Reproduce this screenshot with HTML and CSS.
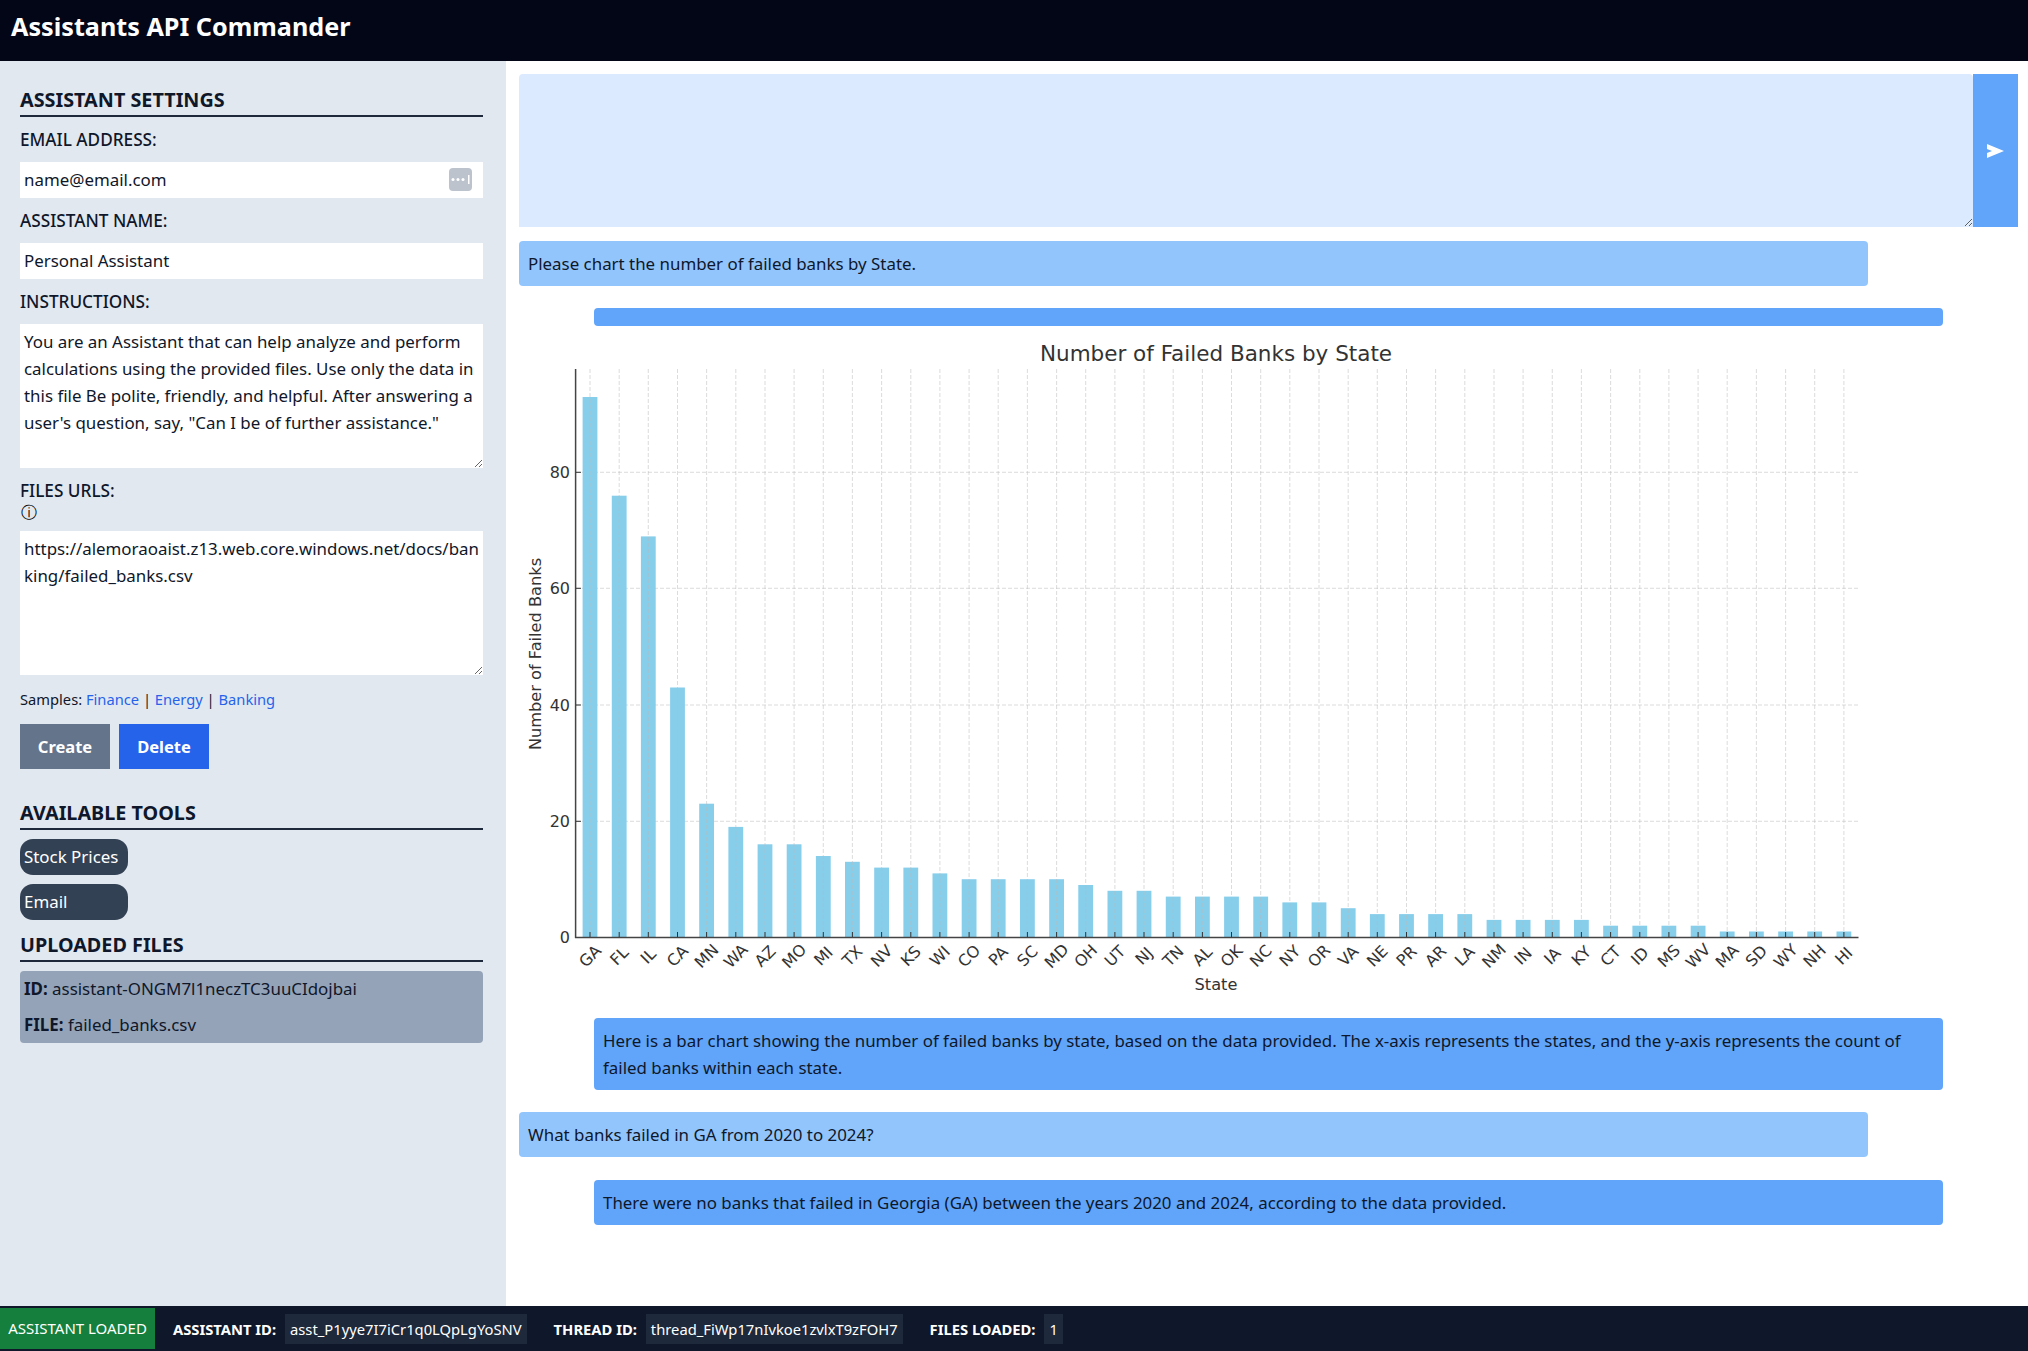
FILE: index.html
```html
<!DOCTYPE html>
<html lang="en">
<head>
    <meta charset="UTF-8">
    <title>Assistants API Commander</title>
    <link rel="stylesheet" href="styles.css">
</head>
<body>
<div class="app">
    <header class="topbar">Assistants API Commander</header>
    <div class="content">
        <aside class="sidebar">
            <h2 class="section-title first">ASSISTANT SETTINGS</h2>
            <label class="field-label">EMAIL ADDRESS:</label>
            <div class="input-wrap">
                <input class="field" type="text" value="name@email.com">
                <span class="pw-icon">
                    <svg width="23" height="23" viewBox="0 0 23 23"><rect width="23" height="23" rx="4" fill="#bcc3cd"/><circle cx="4" cy="11.500" r="1.500" fill="#fff"/><circle cx="9" cy="11.500" r="1.500" fill="#fff"/><circle cx="14" cy="11.500" r="1.500" fill="#fff"/><rect x="19" y="7" width="1.500" height="9" fill="#fff"/></svg>
                </span>
            </div>
            <label class="field-label">ASSISTANT NAME:</label>
            <input class="field" type="text" value="Personal Assistant">
            <label class="field-label">INSTRUCTIONS:</label>
            <textarea class="area area-instructions">You are an Assistant that can help analyze and perform calculations using the provided files. Use only the data in this file Be polite, friendly, and helpful. After answering a user's question, say, "Can I be of further assistance."</textarea>
            <label class="field-label files-label">FILES URLS:</label>
            <div class="info-row">ⓘ</div>
            <textarea class="area area-files">https://alemoraoaist.z13.web.core.windows.net/docs/banking/failed_banks.csv</textarea>
            <div class="samples">Samples: <a href="#">Finance</a> | <a href="#">Energy</a> | <a href="#">Banking</a></div>
            <div class="actions">
                <button class="btn btn-create">Create</button>
                <button class="btn btn-delete">Delete</button>
            </div>
            <h2 class="section-title tools-title">AVAILABLE TOOLS</h2>
            <div class="tool">Stock Prices</div>
            <div class="tool">Email</div>
            <h2 class="section-title files-title">UPLOADED FILES</h2>
            <div class="file-box">
                <div><b>ID:</b> assistant-ONGM7l1neczTC3uuCIdojbai</div>
                <div><b>FILE:</b> failed_banks.csv</div>
            </div>
        </aside>
        <main class="chat">
            <div class="prompt">
                <textarea class="prompt-text"></textarea>
                <button class="send">
                    <svg width="17" height="14" viewBox="0 0 17 14"><path d="M0 0L17 7L0 14V9L5 7L0 5Z" fill="#fff"/></svg>
                </button>
            </div>
            <div class="msg msg-user">Please chart the number of failed banks by State.</div>
            <div class="msg-bot msg-empty"></div>
            <svg class="chart" width="1349" height="692" viewBox="519 326 1349 692">
                <defs>
                    <g id="col">
                        <line class="grid" x1="0" y1="369" x2="0" y2="937"/>
                        <line class="tick" x1="0" y1="932" x2="0" y2="937"/>
                    </g>
                </defs>
                <text class="chart-title" x="1216" y="361">Number of Failed Banks by State</text>
                <line class="grid" x1="576" y1="821.300" x2="1858" y2="821.300"/>
                <line class="grid" x1="576" y1="705" x2="1858" y2="705"/>
                <line class="grid" x1="576" y1="588.300" x2="1858" y2="588.300"/>
                <line class="grid" x1="576" y1="472.300" x2="1858" y2="472.300"/>

                <g transform="translate(590 0)"><rect class="bar" x="-7.400" y="397" width="14.800" height="540.300"/><use href="#col"/><text class="state" transform="translate(0 956) rotate(-45)">GA</text></g>
                <g transform="translate(619.200 0)"><rect class="bar" x="-7.400" y="495.700" width="14.800" height="441.600"/><use href="#col"/><text class="state" transform="translate(0 956) rotate(-45)">FL</text></g>
                <g transform="translate(648.300 0)"><rect class="bar" x="-7.400" y="536.400" width="14.800" height="400.900"/><use href="#col"/><text class="state" transform="translate(0 956) rotate(-45)">IL</text></g>
                <g transform="translate(677.500 0)"><rect class="bar" x="-7.400" y="687.500" width="14.800" height="249.800"/><use href="#col"/><text class="state" transform="translate(0 956) rotate(-45)">CA</text></g>
                <g transform="translate(706.600 0)"><rect class="bar" x="-7.400" y="803.700" width="14.800" height="133.600"/><use href="#col"/><text class="state" transform="translate(0 956) rotate(-45)">MN</text></g>
                <g transform="translate(735.800 0)"><rect class="bar" x="-7.400" y="826.900" width="14.800" height="110.400"/><use href="#col"/><text class="state" transform="translate(0 956) rotate(-45)">WA</text></g>
                <g transform="translate(765 0)"><rect class="bar" x="-7.400" y="844.300" width="14.800" height="93"/><use href="#col"/><text class="state" transform="translate(0 956) rotate(-45)">AZ</text></g>
                <g transform="translate(794.100 0)"><rect class="bar" x="-7.400" y="844.300" width="14.800" height="93"/><use href="#col"/><text class="state" transform="translate(0 956) rotate(-45)">MO</text></g>
                <g transform="translate(823.300 0)"><rect class="bar" x="-7.400" y="856" width="14.800" height="81.300"/><use href="#col"/><text class="state" transform="translate(0 956) rotate(-45)">MI</text></g>
                <g transform="translate(852.400 0)"><rect class="bar" x="-7.400" y="861.800" width="14.800" height="75.500"/><use href="#col"/><text class="state" transform="translate(0 956) rotate(-45)">TX</text></g>
                <g transform="translate(881.600 0)"><rect class="bar" x="-7.400" y="867.600" width="14.800" height="69.700"/><use href="#col"/><text class="state" transform="translate(0 956) rotate(-45)">NV</text></g>
                <g transform="translate(910.800 0)"><rect class="bar" x="-7.400" y="867.600" width="14.800" height="69.700"/><use href="#col"/><text class="state" transform="translate(0 956) rotate(-45)">KS</text></g>
                <g transform="translate(939.900 0)"><rect class="bar" x="-7.400" y="873.400" width="14.800" height="63.900"/><use href="#col"/><text class="state" transform="translate(0 956) rotate(-45)">WI</text></g>
                <g transform="translate(969.100 0)"><rect class="bar" x="-7.400" y="879.200" width="14.800" height="58.100"/><use href="#col"/><text class="state" transform="translate(0 956) rotate(-45)">CO</text></g>
                <g transform="translate(998.200 0)"><rect class="bar" x="-7.400" y="879.200" width="14.800" height="58.100"/><use href="#col"/><text class="state" transform="translate(0 956) rotate(-45)">PA</text></g>
                <g transform="translate(1027.400 0)"><rect class="bar" x="-7.400" y="879.200" width="14.800" height="58.100"/><use href="#col"/><text class="state" transform="translate(0 956) rotate(-45)">SC</text></g>
                <g transform="translate(1056.600 0)"><rect class="bar" x="-7.400" y="879.200" width="14.800" height="58.100"/><use href="#col"/><text class="state" transform="translate(0 956) rotate(-45)">MD</text></g>
                <g transform="translate(1085.700 0)"><rect class="bar" x="-7.400" y="885" width="14.800" height="52.300"/><use href="#col"/><text class="state" transform="translate(0 956) rotate(-45)">OH</text></g>
                <g transform="translate(1114.900 0)"><rect class="bar" x="-7.400" y="890.800" width="14.800" height="46.500"/><use href="#col"/><text class="state" transform="translate(0 956) rotate(-45)">UT</text></g>
                <g transform="translate(1144 0)"><rect class="bar" x="-7.400" y="890.800" width="14.800" height="46.500"/><use href="#col"/><text class="state" transform="translate(0 956) rotate(-45)">NJ</text></g>
                <g transform="translate(1173.200 0)"><rect class="bar" x="-7.400" y="896.600" width="14.800" height="40.700"/><use href="#col"/><text class="state" transform="translate(0 956) rotate(-45)">TN</text></g>
                <g transform="translate(1202.400 0)"><rect class="bar" x="-7.400" y="896.600" width="14.800" height="40.700"/><use href="#col"/><text class="state" transform="translate(0 956) rotate(-45)">AL</text></g>
                <g transform="translate(1231.500 0)"><rect class="bar" x="-7.400" y="896.600" width="14.800" height="40.700"/><use href="#col"/><text class="state" transform="translate(0 956) rotate(-45)">OK</text></g>
                <g transform="translate(1260.700 0)"><rect class="bar" x="-7.400" y="896.600" width="14.800" height="40.700"/><use href="#col"/><text class="state" transform="translate(0 956) rotate(-45)">NC</text></g>
                <g transform="translate(1289.800 0)"><rect class="bar" x="-7.400" y="902.400" width="14.800" height="34.900"/><use href="#col"/><text class="state" transform="translate(0 956) rotate(-45)">NY</text></g>
                <g transform="translate(1319 0)"><rect class="bar" x="-7.400" y="902.400" width="14.800" height="34.900"/><use href="#col"/><text class="state" transform="translate(0 956) rotate(-45)">OR</text></g>
                <g transform="translate(1348.200 0)"><rect class="bar" x="-7.400" y="908.200" width="14.800" height="29.100"/><use href="#col"/><text class="state" transform="translate(0 956) rotate(-45)">VA</text></g>
                <g transform="translate(1377.300 0)"><rect class="bar" x="-7.400" y="914.100" width="14.800" height="23.200"/><use href="#col"/><text class="state" transform="translate(0 956) rotate(-45)">NE</text></g>
                <g transform="translate(1406.500 0)"><rect class="bar" x="-7.400" y="914.100" width="14.800" height="23.200"/><use href="#col"/><text class="state" transform="translate(0 956) rotate(-45)">PR</text></g>
                <g transform="translate(1435.600 0)"><rect class="bar" x="-7.400" y="914.100" width="14.800" height="23.200"/><use href="#col"/><text class="state" transform="translate(0 956) rotate(-45)">AR</text></g>
                <g transform="translate(1464.800 0)"><rect class="bar" x="-7.400" y="914.100" width="14.800" height="23.200"/><use href="#col"/><text class="state" transform="translate(0 956) rotate(-45)">LA</text></g>
                <g transform="translate(1494 0)"><rect class="bar" x="-7.400" y="919.900" width="14.800" height="17.400"/><use href="#col"/><text class="state" transform="translate(0 956) rotate(-45)">NM</text></g>
                <g transform="translate(1523.100 0)"><rect class="bar" x="-7.400" y="919.900" width="14.800" height="17.400"/><use href="#col"/><text class="state" transform="translate(0 956) rotate(-45)">IN</text></g>
                <g transform="translate(1552.300 0)"><rect class="bar" x="-7.400" y="919.900" width="14.800" height="17.400"/><use href="#col"/><text class="state" transform="translate(0 956) rotate(-45)">IA</text></g>
                <g transform="translate(1581.400 0)"><rect class="bar" x="-7.400" y="919.900" width="14.800" height="17.400"/><use href="#col"/><text class="state" transform="translate(0 956) rotate(-45)">KY</text></g>
                <g transform="translate(1610.600 0)"><rect class="bar" x="-7.400" y="925.700" width="14.800" height="11.600"/><use href="#col"/><text class="state" transform="translate(0 956) rotate(-45)">CT</text></g>
                <g transform="translate(1639.800 0)"><rect class="bar" x="-7.400" y="925.700" width="14.800" height="11.600"/><use href="#col"/><text class="state" transform="translate(0 956) rotate(-45)">ID</text></g>
                <g transform="translate(1668.900 0)"><rect class="bar" x="-7.400" y="925.700" width="14.800" height="11.600"/><use href="#col"/><text class="state" transform="translate(0 956) rotate(-45)">MS</text></g>
                <g transform="translate(1698.100 0)"><rect class="bar" x="-7.400" y="925.700" width="14.800" height="11.600"/><use href="#col"/><text class="state" transform="translate(0 956) rotate(-45)">WV</text></g>
                <g transform="translate(1727.200 0)"><rect class="bar" x="-7.400" y="931.500" width="14.800" height="5.800"/><use href="#col"/><text class="state" transform="translate(0 956) rotate(-45)">MA</text></g>
                <g transform="translate(1756.400 0)"><rect class="bar" x="-7.400" y="931.500" width="14.800" height="5.800"/><use href="#col"/><text class="state" transform="translate(0 956) rotate(-45)">SD</text></g>
                <g transform="translate(1785.600 0)"><rect class="bar" x="-7.400" y="931.500" width="14.800" height="5.800"/><use href="#col"/><text class="state" transform="translate(0 956) rotate(-45)">WY</text></g>
                <g transform="translate(1814.700 0)"><rect class="bar" x="-7.400" y="931.500" width="14.800" height="5.800"/><use href="#col"/><text class="state" transform="translate(0 956) rotate(-45)">NH</text></g>
                <g transform="translate(1843.900 0)"><rect class="bar" x="-7.400" y="931.500" width="14.800" height="5.800"/><use href="#col"/><text class="state" transform="translate(0 956) rotate(-45)">HI</text></g>

                <line class="axis" x1="575.600" y1="369" x2="575.600" y2="938"/>
                <line class="axis" x1="575" y1="937.500" x2="1858.500" y2="937.500"/>
                <line class="tick" x1="576" y1="821.300" x2="581" y2="821.300"/>
                <line class="tick" x1="576" y1="705" x2="581" y2="705"/>
                <line class="tick" x1="576" y1="588.300" x2="581" y2="588.300"/>
                <line class="tick" x1="576" y1="472.300" x2="581" y2="472.300"/>
                <text class="y-num" x="570" y="937.300">0</text>
                <text class="y-num" x="570" y="821.300">20</text>
                <text class="y-num" x="570" y="705">40</text>
                <text class="y-num" x="570" y="588.300">60</text>
                <text class="y-num" x="570" y="472.300">80</text>
                <text class="axis-name" transform="translate(541 654) rotate(-90)">Number of Failed Banks</text>
                <text class="axis-name" x="1216" y="990">State</text>
            </svg>
            <div class="msg-bot">Here is a bar chart showing the number of failed banks by state, based on the data provided. The x-axis represents the states, and the y-axis represents the count of failed banks within each state.</div>
            <div class="msg msg-user second">What banks failed in GA from 2020 to 2024?</div>
            <div class="msg-bot last">There were no banks that failed in Georgia (GA) between the years 2020 and 2024, according to the data provided.</div>
        </main>
    </div>
    <footer class="statusbar">
        <span class="status-ok">ASSISTANT LOADED</span>
        <span class="status-label label-assistant">ASSISTANT ID:</span>
        <span class="status-chip">asst_P1yye7I7iCr1q0LQpLgYoSNV</span>
        <span class="status-label label-thread">THREAD ID:</span>
        <span class="status-chip">thread_FiWp17nIvkoe1zvlxT9zFOH7</span>
        <span class="status-label label-files">FILES LOADED:</span>
        <span class="status-chip">1</span>
    </footer>
</div>
</body>
</html>
```

FILE: styles.css
```css
*{
    box-sizing: border-box;
}
body{
    margin: 0;
    font-family: "Noto Sans", "Open Sans", sans-serif;
    font-size: 16.900px;
    color: #0f172a;
    background: #fff;
}
.app{
    display: flex;
    flex-direction: column;
    height: 100vh;
    overflow: hidden;
}
.topbar{
    flex: none;
    height: 61px;
    padding: 8px 11px;
    background: #020617;
    color: #fff;
    font-size: 25.200px;
    font-weight: 700;
    line-height: 36px;
}
.content{
    flex: 1;
    display: flex;
    min-height: 0;
}

/* left column */
.sidebar{
    flex: none;
    width: 506px;
    padding: 24px 23px 0 20px;
    background: #e2e8f0;
}
.section-title{
    margin: 0;
    height: 32px;
    font-size: 19.800px;
    font-weight: 700;
    line-height: 30px;
    border-bottom: 2px solid #1e293b;
}
.tools-title{
    margin-top: 29px;
}
.files-title{
    margin-top: 10px;
}
.field-label{
    display: block;
    margin-top: 9px;
    margin-bottom: 9px;
    font-size: 17.200px;
    font-weight: 500;
    line-height: 27px;
}
.field{
    display: block;
    width: 100%;
    height: 36px;
    padding: 0 4px 1px;
    border: 0;
    outline: 0;
    background: #fff;
    color: #0f172a;
    font: inherit;
}
.input-wrap{
    position: relative;
}
.pw-icon{
    position: absolute;
    top: 6px;
    right: 11px;
    height: 23px;
}
.area{
    display: block;
    width: 100%;
    padding: 4px;
    border: 0;
    outline: 0;
    background: #fff;
    color: #0f172a;
    font: inherit;
    line-height: 27px;
    border-radius: 0;
}
.area-instructions{
    height: 144px;
}
.area-files{
    height: 144px;
}
.files-label{
    margin-top: 10px;
    margin-bottom: 0;
    line-height: 25px;
}
.info-row{
    height: 18px;
    margin-bottom: 10px;
    padding-left: 1px;
    color: #000;
    font-family: "DejaVu Sans", sans-serif;
    font-size: 16px;
    line-height: 20px;
}
.samples{
    margin-top: 14px;
    font-size: 14.700px;
    line-height: 20px;
}
.samples a{
    color: #2563eb;
    text-decoration: none;
}
.actions{
    display: flex;
    gap: 9px;
    margin-top: 15px;
}
.btn{
    width: 90px;
    height: 45px;
    border: 0;
    color: #fff;
    font: inherit;
    font-size: 16.500px;
    font-weight: 700;
}
.btn-create{
    background: #64748b;
}
.btn-delete{
    background: #2563eb;
}
.tool{
    width: 108px;
    height: 36px;
    margin-top: 9px;
    padding-left: 4px;
    border-radius: 13px;
    background: #334155;
    color: #fff;
    line-height: 36px;
}
.file-box{
    margin-top: 9px;
    padding: 0 4px;
    border-radius: 4px;
    background: #94a3b8;
    line-height: 36px;
}

/* right column */
.chat{
    flex: 1;
    min-width: 0;
    padding: 13px 10px 0 13px;
}
.prompt{
    display: flex;
    height: 153px;
}
.prompt-text{
    flex: 1;
    border: 0;
    outline: 0;
    border-radius: 4px 4px 0 0;
    background: #dbeafe;
}
.send{
    flex: none;
    display: flex;
    align-items: center;
    justify-content: center;
    width: 45px;
    padding: 0;
    border: 0;
    background: #60a5fa;
}
.msg{
    padding: 9px;
    border-radius: 4px;
    line-height: 27px;
}
.msg-user{
    margin-top: 14px;
    margin-right: 150px;
    background: #93c5fd;
}
.msg-user.second{
    margin-top: 22px;
}
.msg-bot{
    margin-left: 75px;
    margin-right: 75px;
    padding: 9px;
    border-radius: 4px;
    background: #60a5fa;
    line-height: 27px;
}
.msg-empty{
    height: 18px;
    margin-top: 22px;
    padding: 0;
}
.msg-bot.last{
    margin-top: 23px;
}
.chart{
    display: block;
}

/* chart text and marks */
.chart text{
    font-family: "DejaVu Sans", sans-serif;
    fill: #333;
}
.chart .chart-title{
    font-size: 21.500px;
    text-anchor: middle;
}
.chart .state{
    font-size: 16px;
    text-anchor: middle;
    dominant-baseline: central;
}
.chart .y-num{
    font-size: 16px;
    text-anchor: end;
    dominant-baseline: central;
}
.chart .axis-name{
    font-size: 16.200px;
    text-anchor: middle;
}
.grid{
    stroke: #bbb;
    stroke-width: 1;
    stroke-dasharray: 4 2;
    opacity: .5;
}
.tick{
    stroke: #333;
    stroke-width: 1;
}
.axis{
    stroke: #444;
    stroke-width: 1.500;
}
.bar{
    fill: #87ceeb;
}

/* bottom bar */
.statusbar{
    flex: none;
    display: flex;
    align-items: center;
    height: 45px;
    background: #0f172a;
    color: #fff;
    font-size: 14.750px;
}
.status-ok{
    width: 155px;
    height: 41px;
    background: #15803d;
    font-size: 15px;
    line-height: 41px;
    text-align: center;
}
.status-label{
    margin-right: 9px;
    font-weight: 700;
}
.label-assistant{
    margin-left: 18px;
}
.label-thread{
    margin-left: 27px;
}
.label-files{
    margin-left: 27px;
}
.status-chip{
    height: 30px;
    padding: 0 5px;
    background: #1e293b;
    line-height: 30px;
}
```
